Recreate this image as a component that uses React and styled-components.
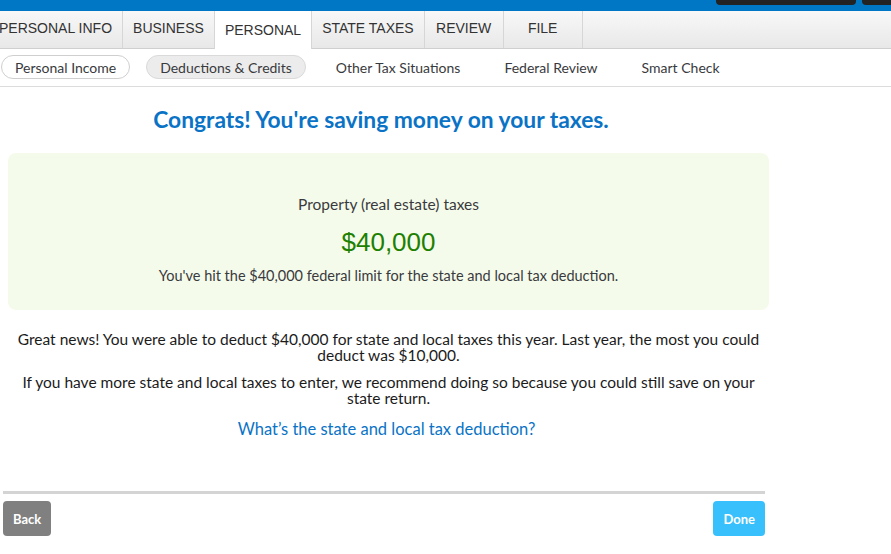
import React from "react"
import styled, { createGlobalStyle, css } from "styled-components"

const GlobalStyle = createGlobalStyle`
  html, body {
    margin: 0;
    padding: 0;
    background: #fff;
    overflow: hidden;
  }

  body {
    font-family: Lato, "Noto Sans", sans-serif;
    color: #222;
  }
`

const TopBar = styled.div`
  height: 11px;
  background: #0077c5;
  display: flex;
  align-items: flex-start;
  gap: 6px;
  padding-left: 716px;
  overflow: hidden;
`

const DarkPill = styled.div`
  flex: none;
  width: ${({ $width }) => $width}px;
  height: 5px;
  background: #232323;
  border-radius: 0 0 4px 4px;
`

const TabRow = styled.nav`
  display: flex;
  height: 37px;
  margin-left: -11px;
  background: linear-gradient(#f8f8f8, #e8e8e8);
  border-bottom: 1px solid #cfcfcf;
`

const Tab = styled.div`
  box-sizing: border-box;
  min-width: 79px;
  height: 37px;
  padding: 0 10px 4px;
  display: flex;
  align-items: center;
  justify-content: center;
  border-right: 1px solid #d6d6d6;
  font-family: "Liberation Sans", Arial, sans-serif;
  font-size: 14px;
  color: #333;
  white-space: nowrap;

  ${({ $active }) =>
    $active &&
    css`
      background: #fff;
      height: 38px;
      padding-bottom: 0;
      margin-left: -1px;
      border-left: 1px solid #d6d6d6;
    `}
`

const SubNav = styled.nav`
  display: flex;
  align-items: center;
  gap: 16px;
  height: 37px;
  padding: 0 0 1px 1px;
  box-sizing: border-box;
  height: 38px;
  border-bottom: 1px solid #dcdcdc;
`

const SubItem = styled.div`
  box-sizing: border-box;
  height: 24px;
  padding: 0 13px;
  display: flex;
  align-items: center;
  border-radius: 12px;
  border: 1px solid transparent;
  font-size: 14px;
  color: #393a3d;
  white-space: nowrap;

  ${({ $variant }) =>
    $variant === "done" &&
    css`
      border-color: #cfcfcf;
      background: #fff;
    `}

  ${({ $variant }) =>
    $variant === "current" &&
    css`
      border-color: #dadada;
      background: #ececec;
    `}
`

const Main = styled.main`
  width: 762px;
  margin-left: 3px;
  display: flex;
  flex-direction: column;
`

const Heading = styled.h1`
  margin: 19px 0 0;
  padding-right: 6px;
  text-align: center;
  font-size: 22.8px;
  line-height: 26px;
  font-weight: 700;
  color: #0a73c6;
`

const SummaryBox = styled.section`
  margin: 21px -4px 0 5px;
  padding: 41px 20px 24px;
  background: #f5fbeb;
  border-radius: 8px;
  display: flex;
  flex-direction: column;
  align-items: center;
  text-align: center;
`

const BoxLabel = styled.div`
  font-size: ${({ $size }) => $size || 14.5}px;
  line-height: 20px;
  color: #393a3d;
`

const Amount = styled.div`
  margin: 13px 0 9px;
  font-family: "Liberation Sans", Arial, sans-serif;
  font-size: 26px;
  line-height: 30px;
  color: #1d8000;
`

const Paragraphs = styled.div`
  margin: 21px -4px 0 5px;
  display: flex;
  flex-direction: column;
  gap: 11px;
  text-align: center;
`

const Para = styled.p`
  margin: 0;
  font-size: 15.5px;
  line-height: 16px;
  color: #1b1b1b;
`

const HelpLink = styled.a`
  margin: 13px 0 0 5px;
  text-align: center;
  font-size: 16.5px;
  line-height: 20px;
  color: #0a73c6;
  text-decoration: none;
  cursor: pointer;
`

const Footer = styled.footer`
  margin-top: 52px;
  border-top: 3px solid #d4d4d4;
  padding-top: 7px;
  display: flex;
  justify-content: space-between;
`

const Button = styled.button`
  height: 35px;
  padding: 0 10px;
  border: none;
  border-radius: 4px;
  background: ${({ $primary }) => ($primary ? "#37c0fb" : "#808080")};
  color: #fff;
  font-family: Lato, "Noto Sans", sans-serif;
  font-size: 13px;
  font-weight: 700;
  cursor: pointer;
`

const tabs = ["PERSONAL INFO", "BUSINESS", "PERSONAL", "STATE TAXES", "REVIEW", "FILE"]

const subItems = [
  { label: "Personal Income", variant: "done" },
  { label: "Deductions & Credits", variant: "current" },
  { label: "Other Tax Situations" },
  { label: "Federal Review" },
  { label: "Smart Check" },
]

const App = () => (
  <>
    <GlobalStyle />
    <TopBar>
      <DarkPill $width={140} />
      <DarkPill $width={60} />
    </TopBar>
    <TabRow>
      {tabs.map((tab) => (
        <Tab key={tab} $active={tab === "PERSONAL"}>
          {tab}
        </Tab>
      ))}
    </TabRow>
    <SubNav>
      {subItems.map((item) => (
        <SubItem key={item.label} $variant={item.variant}>
          {item.label}
        </SubItem>
      ))}
    </SubNav>
    <Main>
      <Heading>Congrats! You're saving money on your taxes.</Heading>
      <SummaryBox>
        <BoxLabel $size={15.5}>Property (real estate) taxes</BoxLabel>
        <Amount>$40,000</Amount>
        <BoxLabel>
          You've hit the $40,000 federal limit for the state and local tax deduction.
        </BoxLabel>
      </SummaryBox>
      <Paragraphs>
        <Para>
          Great news! You were able to deduct $40,000 for state and local taxes this
          year. Last year, the most you could deduct was $10,000.
        </Para>
        <Para>
          If you have more state and local taxes to enter, we recommend doing so
          because you could still save on your state return.
        </Para>
      </Paragraphs>
      <HelpLink>What’s the state and local tax deduction?</HelpLink>
      <Footer>
        <Button>Back</Button>
        <Button $primary>Done</Button>
      </Footer>
    </Main>
  </>
)

export default App
